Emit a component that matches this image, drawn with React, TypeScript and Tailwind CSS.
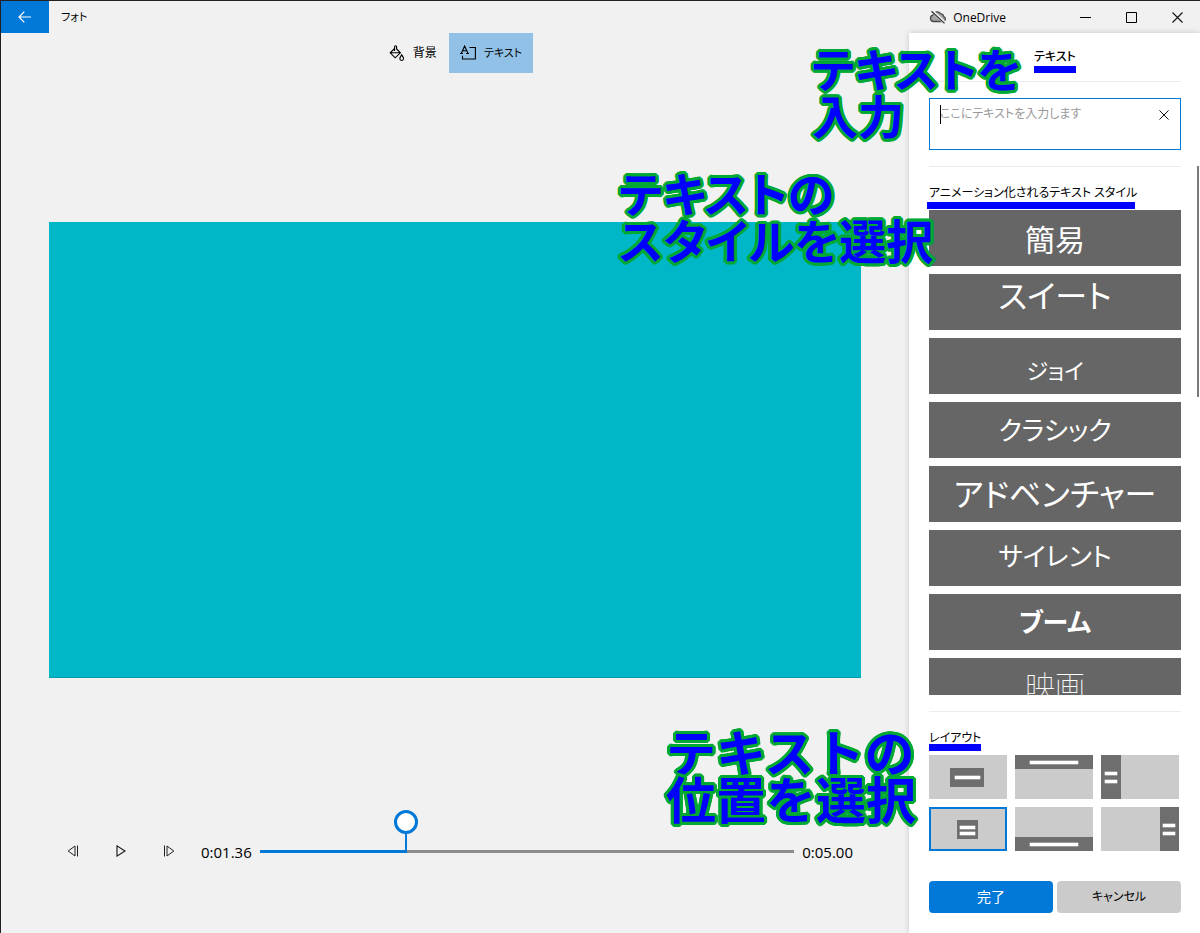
import React, { useState } from 'react';

interface TextStyle {
  name: string;
  className: string;
}

const TEXT_STYLES: TextStyle[] = [
  { name: '簡易', className: 'text-[30px] font-normal pt-1' },
  { name: 'スイート', className: 'text-[32px] font-normal pb-3' },
  { name: 'ジョイ', className: 'text-[22px] font-normal pt-2' },
  { name: 'クラシック', className: 'text-[26px] font-normal' },
  { name: 'アドベンチャー', className: 'text-[32px] font-normal' },
  { name: 'サイレント', className: 'text-[26px] font-normal pb-1' },
  { name: 'ブーム', className: 'text-[26px] font-bold' },
  { name: '映画', className: 'text-[30px] font-thin' },
];

// Title block and its text lines, drawn on a 78x44 thumbnail
const LAYOUTS = [
  { id: 'center', label: '中央', block: [21, 13, 34, 19], lines: [[26, 21, 25, 3]] },
  { id: 'top', label: '上', block: [0, 0, 78, 14], lines: [[15, 6, 48, 3]] },
  { id: 'left', label: '左', block: [0, 0, 20, 44], lines: [[4, 17, 12, 3], [4, 25, 12, 3]] },
  { id: 'center-stacked', label: '中央 2 行', block: [28, 13, 21, 19], lines: [[31, 19, 15, 3], [31, 25, 15, 3]] },
  { id: 'bottom', label: '下', block: [0, 30, 78, 14], lines: [[15, 36, 48, 3]] },
  { id: 'right', label: '右', block: [59, 0, 19, 44], lines: [[62, 17, 12, 3], [62, 25, 12, 3]] },
];

// milliseconds
const DURATION = 5000;

const formatTime = (ms: number) => {
  const s = Math.floor(ms / 1000);
  const hundredths = Math.floor((ms % 1000) / 10);
  return `0:${String(s).padStart(2, '0')}.${String(hundredths).padStart(2, '0')}`;
};

const CloudOffIcon = () => (
  <svg width="18" height="14" viewBox="0 0 18 14" fill="none">
    <path d="M4.500 11.500a3.200 3.200 0 0 1-.6-6.300A4.300 4.300 0 0 1 11.600 3.600a3.800 3.800 0 0 1 3.200 3 2.600 2.600 0 0 1-.4 4.900Z" fill="#a3a3a3" stroke="#4a4a4a" strokeWidth="1.300" />
    <path d="M3 .8l13 12.400" stroke="#f1f1f1" strokeWidth="3" />
    <path d="M2.500 1.200l13 12.200" stroke="#333" strokeWidth="1.200" />
  </svg>
);

const FillIcon = () => (
  <svg width="16" height="18" viewBox="0 0 16 18" fill="none" stroke="#000" strokeWidth="1.100">
    <path d="M5.600 7V2.700a1 1 0 0 1 2 0V5.500M5.600 4.500L1.200 8.800l5 5 5.200-5L7.600 5M1.200 8.800h10.200" />
    <path d="M12.700 10.800c-1.200 1.900-1.900 2.800-1.900 3.800a1.900 1.900 0 0 0 3.800 0c0-1-.7-1.900-1.900-3.800Z" />
  </svg>
);

const TextIcon = () => (
  <svg width="16" height="16" viewBox="0 0 16 16" fill="none" stroke="#000" strokeWidth="1.100">
    <path d="M1.300 8.500L4.600 1 8 8.500M2.500 5.700h4.300M0 8.500h2.800M6.200 8.500H9" />
    <path d="M9.500 2.500h5.900v11.500H2.500V10.800" />
  </svg>
);

const CloseIcon = ({ size }: { size: number }) => (
  <svg width={size} height={size} viewBox="0 0 11 11" fill="none" stroke="#111" strokeWidth="1.100">
    <path d="M.5.500l10 10M10.500.500l-10 10" />
  </svg>
);

const Marker = ({ className = '' }: { className?: string }) => (
  <span aria-hidden="true" className={`absolute h-[7px] bg-[#0000ff] ${className}`} />
);

// The ring of shadows gives the letters a rounded green edge
const Note = ({ className, lines }: { className: string; lines: string[] }) => (
  <p className={`absolute z-20 pointer-events-none whitespace-nowrap font-bold leading-[47px] text-[#0000ff] [text-shadow:3px_0_#00a933,-3px_0_#00a933,0_3px_#00a933,0_-3px_#00a933,3px_1px_#00a933,3px_-1px_#00a933,-3px_1px_#00a933,-3px_-1px_#00a933,1px_3px_#00a933,-1px_3px_#00a933,1px_-3px_#00a933,-1px_-3px_#00a933,2px_2px_#00a933,2px_-2px_#00a933,-2px_2px_#00a933,-2px_-2px_#00a933] ${className}`}>
    {lines.map(line => <span key={line} className="block">{line}</span>)}
  </p>
);

export default function App() {
  const [text, setText] = useState('');
  const [layout, setLayout] = useState('center-stacked');
  const [time, setTime] = useState(1369);
  const progress = `${(time / DURATION) * 100}%`;

  return (
    <div className="relative flex flex-col h-screen overflow-hidden border-t border-l border-[#231f20] bg-[#f1f1f1] text-black text-xs font-['Open_Sans','Noto_Sans_CJK_JP',sans-serif] [font-feature-settings:'palt']">
      <header className="flex items-center h-8 shrink-0">
        <button aria-label="戻る" className="flex items-center justify-center w-12 h-8 bg-[#0078d7]">
          <svg width="14" height="12" viewBox="0 0 14 12" fill="none" stroke="#fff" strokeWidth="1.200">
            <path d="M13 6H1M6.300.700L1 6l5.300 5.300" />
          </svg>
        </button>
        <h1 className="flex-1 pl-3 pt-px text-[11px]">フォト</h1>
        <div className="flex items-center gap-[6px] mr-14">
          <CloudOffIcon />
          <span className="pt-px">OneDrive</span>
        </div>
        <button aria-label="最小化" className="flex items-center justify-center w-[46px] h-8">
          <svg width="11" height="11" viewBox="0 0 11 11" stroke="#000"><path d="M0 5.500h11" /></svg>
        </button>
        <button aria-label="最大化" className="flex items-center justify-center w-[46px] h-8">
          <svg width="11" height="11" viewBox="0 0 11 11" fill="none" stroke="#000"><path d="M.5.500h10v10H.5z" /></svg>
        </button>
        <button aria-label="閉じる" className="flex items-center justify-center w-[46px] h-8">
          <CloseIcon size={11} />
        </button>
      </header>

      <div className="flex flex-1 min-h-0">
        <main className="flex flex-col flex-1 min-w-0 px-12">
          <div className="flex justify-center h-10 text-[11px]">
            <button className="flex items-center gap-2 px-3">
              <FillIcon />
              <span className="text-xs">背景</span>
            </button>
            <button aria-pressed="true" className="flex items-center gap-2 px-[11px] bg-[#91c1e7]">
              <TextIcon />
              <span>テキスト</span>
            </button>
          </div>

          <div className="flex items-center flex-1 min-h-0">
            <div className="w-full aspect-video bg-[#00b7c7] border-b border-[#0b9aa7]" />
          </div>

          <div className="flex items-center h-12 mb-[58px] text-[15px]">
            <button aria-label="前のフレーム" className="flex items-center justify-center w-12 h-12">
              <svg width="12" height="12" viewBox="0 0 12 12" fill="none" stroke="#222">
                <path d="M8 1v10L1.200 6ZM10.500.500v11" />
              </svg>
            </button>
            <button aria-label="再生" className="flex items-center justify-center w-12 h-12">
              <svg width="10" height="12" viewBox="0 0 10 12" fill="none" stroke="#111" strokeWidth="1.100">
                <path d="M1 .9v10.200L9 6Z" />
              </svg>
            </button>
            <button aria-label="次のフレーム" className="flex items-center justify-center w-12 h-12">
              <svg width="12" height="12" viewBox="0 0 12 12" fill="none" stroke="#222">
                <path d="M4 1v10l6.800-5ZM1.500.500v11" />
              </svg>
            </button>
            <span className="ml-2 pt-[2px]">{formatTime(time)}</span>
            <div className="relative flex-1 h-[3px] mx-2 bg-[#8c8c8c]">
              <div className="h-full bg-[#0078d7]" style={{ width: progress }} />
              <div aria-hidden="true" className="absolute bottom-0 flex flex-col items-center -translate-x-1/2" style={{ left: progress }}>
                <div className="w-6 h-6 rounded-full border-[3px] border-[#0078d7] bg-white" />
                <div className="w-[2px] h-[19px] bg-[#0078d7]" />
              </div>
              <input
                type="range"
                aria-label="再生位置"
                min={0}
                max={DURATION}
                value={time}
                onChange={e => setTime(Number(e.target.value))}
                className="absolute inset-x-0 bottom-0 w-full h-10 opacity-0 cursor-pointer"
              />
            </div>
            <span className="mr-2 pt-[2px]">{formatTime(DURATION)}</span>
          </div>
        </main>

        <aside className="relative flex flex-col w-[291px] shrink-0 pl-5 pr-[19px] bg-white shadow-[0_0_6px_rgba(0,0,0,0.18)]">
          <div className="flex items-center justify-center h-[49px] shrink-0 border-b border-[#ececec]">
            <h2 className="relative text-xs font-medium">
              テキスト
              <Marker className="inset-x-0 -bottom-2" />
            </h2>
          </div>

          <div className="relative py-4 shrink-0 border-b border-[#ececec]">
            <textarea
              aria-label="テキスト"
              placeholder="ここにテキストを入力します"
              value={text}
              onChange={e => setText(e.target.value)}
              className="block w-full h-[52px] px-[10px] py-[7px] text-xs border border-[#0078d7] resize-none outline-none placeholder:text-[#999]"
            />
            {text === '' && <span aria-hidden="true" className="absolute top-[23px] left-[11px] w-px h-[19px] bg-black" />}
            <button aria-label="クリア" onClick={() => setText('')} className="absolute top-7 right-3">
              <CloseIcon size={10} />
            </button>
          </div>

          <section className="flex flex-col flex-1 min-h-0 pb-4 border-b border-[#ececec]">
            <div className="flex items-center h-[43px] shrink-0 pt-2">
              <h3 className="relative text-xs">
                アニメーション化されるテキスト スタイル
                <Marker className="-left-[2px] right-[2px] -bottom-2" />
              </h3>
            </div>
            <div className="flex flex-col flex-1 min-h-0 gap-2 overflow-hidden">
              {TEXT_STYLES.map(s => (
                <button key={s.name} className={`flex items-center justify-center h-14 shrink-0 leading-none text-white bg-[#666] ${s.className}`}>
                  {s.name}
                </button>
              ))}
            </div>
          </section>
          <div aria-hidden="true" className="absolute top-[133px] right-px w-[2px] h-[231px] bg-[#7a7a7a]" />

          <section className="shrink-0">
            <div className="flex items-center h-[43px] pt-2">
              <h3 className="relative text-xs">
                レイアウト
                <Marker className="inset-x-0 -bottom-[5px]" />
              </h3>
            </div>
            <div className="grid grid-cols-3 gap-2 pr-[2px]">
              {LAYOUTS.map(l => (
                <button
                  key={l.id}
                  aria-label={l.label}
                  aria-pressed={layout === l.id}
                  onClick={() => setLayout(l.id)}
                  className={`h-11 bg-[#cbcbcb] ${layout === l.id ? 'outline-2 -outline-offset-2 outline-[#0078d7]' : ''}`}
                >
                  <svg viewBox="0 0 78 44" className="block w-full h-full">
                    <rect x={l.block[0]} y={l.block[1]} width={l.block[2]} height={l.block[3]} fill="#6e6e6e" />
                    {l.lines.map(([x, y, w, h]) => (
                      <rect key={y} x={x} y={y} width={w} height={h} fill="#fff" stroke="#fff" strokeWidth=".6" />
                    ))}
                  </svg>
                </button>
              ))}
            </div>
          </section>

          <div className="grid grid-cols-2 gap-1 pt-[30px] pb-5 shrink-0">
            <button className="h-8 rounded-sm bg-[#0078d7] text-sm text-white">完了</button>
            <button className="h-8 rounded-sm bg-[#cbcbcb]">キャンセル</button>
          </div>
        </aside>
      </div>

      <Note className="top-[45px] left-[811px] text-[46px]" lines={['テキストを', '入力']} />
      <Note className="top-[170px] left-[618px] text-[47px]" lines={['テキストの', 'スタイルを選択']} />
      <Note className="top-[729px] left-[665px] text-[50px] [font-feature-settings:normal]" lines={['テキストの', '位置を選択']} />
    </div>
  );
}
